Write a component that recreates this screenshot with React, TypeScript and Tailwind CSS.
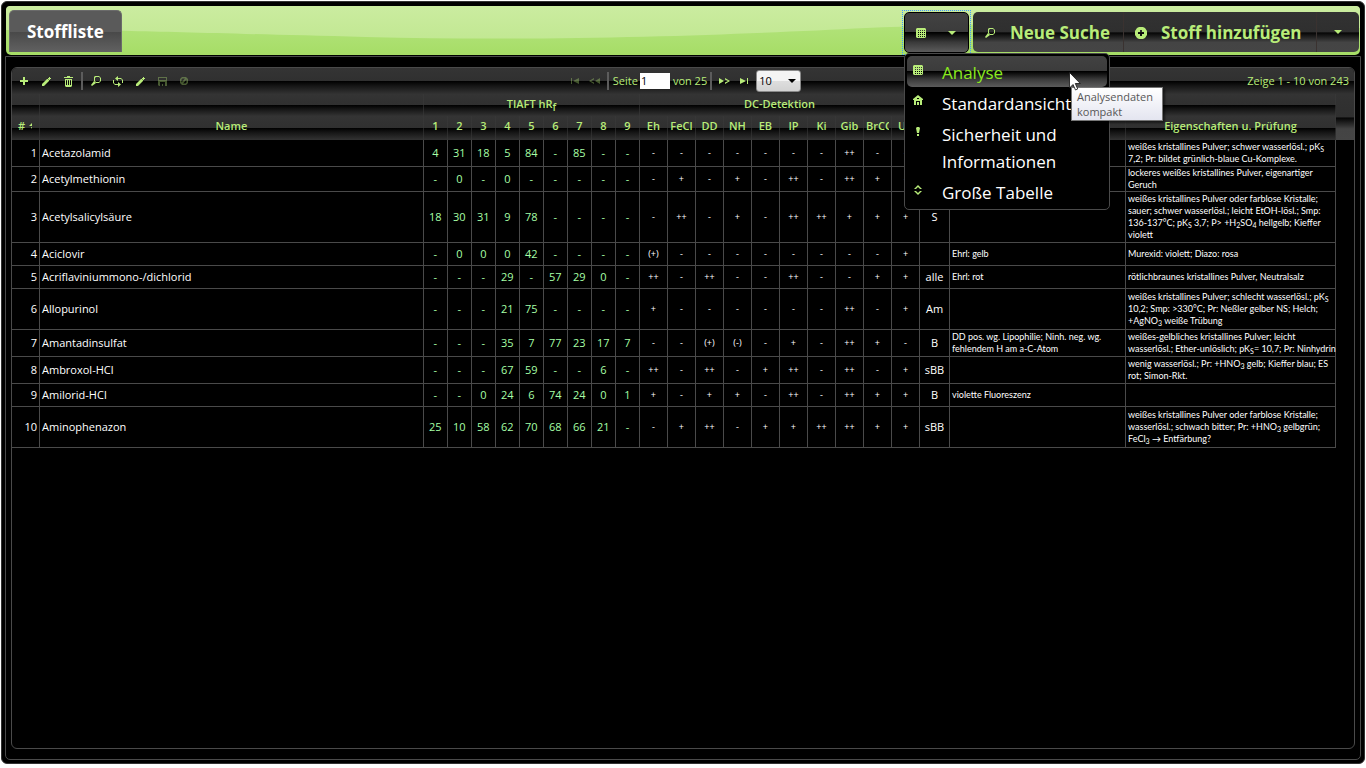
import React, { ReactNode } from "react";

const glass =
  "bg-[linear-gradient(#343434_0%,#303030_50%,#000_50%,#151515_68%,#333_100%)]";
const glassTall =
  "bg-[linear-gradient(#323232_0%,#2f2f2f_50%,#050505_52%,#444_76%,#454545_100%)]";
const glassActive =
  "bg-[linear-gradient(#424242_0%,#3b3b3b_50%,#000_50%,#3a3a3a_75%,#5c5c5c_100%)]";

type IconName =
  | "plus" | "pencil" | "trash" | "search" | "refresh" | "disk" | "cancel"
  | "first" | "prev" | "next" | "last" | "calculator" | "triangle"
  | "home" | "notice" | "updown" | "circlePlus";

const shapes: Record<IconName, ReactNode> = {
  plus: <path d="M7 4h2v3h3v2H9v3H7V9H4V7h3z" />,
  pencil: (
    <>
      <path d="M4 13v-2l5-5h1l1 1v1l-5 5z" />
      <path d="M11 4h1v1h1v1h-1v1h-1V6h-1V5h1z" />
    </>
  ),
  trash: (
    <path fillRule="evenodd" d="M4 4h3V3h3v1h3v1H4zM5 6h7v7l-1 1H6l-1-1zM6 7v5h1V7zm2 0v5h1V7zm2 0v5h1V7z" />
  ),
  search: (
    <>
      <path fillRule="evenodd" d="M7 3h4l2 2v3l-2 2H8L6 8V4zM8 4L7 5v3l1 1h3l1-1V5l-1-1z" />
      <path d="M6 8l2 2-4 3-1-1z" />
    </>
  ),
  refresh: (
    <>
      <path d="M8 3v2h3l2 2v3h-1V7l-1-1H8v2L5 5.500z" />
      <path d="M8 14v-2H5l-2-2V7h1v3l1 1h3V9l3 2.500z" />
    </>
  ),
  disk: (
    <path fillRule="evenodd" d="M4 4h9v9H5l-1-1zM5 5v2h7V5zM6 9v4h2v-2h1v2h2V9z" />
  ),
  cancel: (
    <path fillRule="evenodd" d="M6 4h4l2 2v4l-2 2H6l-2-2V6zM6.500 5.500l-1 1v3L9 5.500zM10.500 6.500L7 10.500h2.500l1-1z" />
  ),
  first: <path d="M4 5h1v6H4zM12 5v6L6 8z" />,
  prev: <path d="M13 5v6L8 8zM7 5v1.500L4 8l3 1.500V11L2 8z" />,
  next: <path d="M3 5v6l5-3zM9 5v1.500L12 8l-3 1.500V11l5-3z" />,
  last: <path d="M11 5h1v6h-1zM4 5v6l6-3z" />,
  calculator: (
    <path
      fillRule="evenodd"
      d="M4 3h8l1 1v8l-1 1H4l-1-1V4zM5 5v1h1V5zm2 0v1h1V5zm2 0v1h1V5zm2 0v1h1V5zM5 7v1h1V7zm2 0v1h1V7zm2 0v1h1V7zm2 0v1h1V7zM5 9v1h1V9zm2 0v1h1V9zm2 0v1h1V9zm2 0v1h1V9zM5 11v1h1v-1zm2 0v1h1v-1zm2 0v1h1v-1zm2 0v1h1v-1z"
    />
  ),
  triangle: <path d="M4 6h8L8 10z" />,
  home: <path fillRule="evenodd" d="M8 2l5 4v1h-1v5H4V7H3V6zM6 8v4h1V9h2v3h1V8zM7 5v1h2V5z" />,
  notice: <path d="M7 3h2l1 1-1 5H7L6 4zM7 10h2v2H7z" />,
  updown: (
    <path d="M8 3l4 4h-2L8 5 6 7H4zM8 13l4-4h-2l-2 2-2-2H4z" />
  ),
  circlePlus: (
    <path fillRule="evenodd" d="M6 2h4l2 1 2 3v4l-2 3-2 1H6l-2-1-2-3V6l2-3zM7 5v2H5v2h2v2h2V9h2V7H9V5z" />
  ),
};

function Icon({ name, className = "" }: { name: IconName; className?: string }) {
  return (
    <svg
      viewBox="0 0 16 16"
      aria-hidden="true"
      className={`size-4 shrink-0 fill-[#b8ec79] ${className}`}
    >
      {shapes[name]}
    </svg>
  );
}

function ToolButton({
  icon,
  label,
  disabled,
  width = "w-[22px]",
}: {
  icon: IconName;
  label: string;
  disabled?: boolean;
  width?: string;
}) {
  return (
    <button
      type="button"
      aria-label={label}
      disabled={disabled}
      className={`flex h-5 items-center justify-center disabled:opacity-35 ${width}`}
    >
      <Icon name={icon} />
    </button>
  );
}

function Separator({ className = "" }: { className?: string }) {
  return <span className={`h-[18px] w-0.5 bg-[#5c5c5c] ${className}`} />;
}

const S = ({ children }: { children: ReactNode }) => (
  <sub className="text-[7px] leading-none">{children}</sub>
);

interface Row {
  name: string;
  height: string;
  hrf: string;
  dc: string;
  kind?: string;
  note?: ReactNode[];
  props?: ReactNode[];
}

const rows: Row[] = [
  {
    name: "Acetazolamid", height: "h-[27px]",
    hrf: "4 31 18 5 84 - 85 - -", dc: "- - - - - - - ++ - -",
    props: [<>weißes kristallines Pulver; schwer wasserlösl.; pK<S>S</S></>, "7,2; Pr: bildet grünlich-blaue Cu-Komplexe."],
  },
  {
    name: "Acetylmethionin", height: "h-[25px]",
    hrf: "- 0 - 0 - - - - -", dc: "- + - + - ++ - ++ + -",
    props: ["lockeres weißes kristallines Pulver, eigenartiger", "Geruch"],
  },
  {
    name: "Acetylsalicylsäure", height: "h-[51px]",
    hrf: "18 30 31 9 78 - - - -", dc: "- ++ - + - ++ ++ + + +", kind: "S",
    props: [
      "weißes kristallines Pulver oder farblose Kristalle;",
      "sauer; schwer wasserlösl.; leicht EtOH-lösl.; Smp:",
      <>136-137°C; pK<S>S</S> 3,7; P&gt; +H<S>2</S>SO<S>4</S> hellgelb; Kieffer</>,
      "violett",
    ],
  },
  {
    name: "Aciclovir", height: "h-[23px]",
    hrf: "- 0 0 0 42 - - - -", dc: "(+) - - - - - - - - +",
    note: ["Ehrl: gelb"], props: ["Murexid: violett; Diazo: rosa"],
  },
  {
    name: "Acriflaviniummono-/dichlorid", height: "h-[23px]",
    hrf: "- - - 29 - 57 29 0 -", dc: "++ - ++ - - ++ - - + +", kind: "alle",
    note: ["Ehrl: rot"], props: ["rötlichbraunes kristallines Pulver, Neutralsalz"],
  },
  {
    name: "Allopurinol", height: "h-[41px]",
    hrf: "- - - 21 75 - - - -", dc: "+ - - - - - - ++ - +", kind: "Am",
    props: [
      <>weißes kristallines Pulver; schlecht wasserlösl.; pK<S>S</S></>,
      "10,2; Smp: >330°C; Pr: Neßler gelber NS; Helch;",
      <>+AgNO<S>3</S> weiße Trübung</>,
    ],
  },
  {
    name: "Amantadinsulfat", height: "h-[27px]",
    hrf: "- - - 35 7 77 23 17 7", dc: "- - (+) (-) - + - ++ + -", kind: "B",
    note: ["DD pos. wg. Lipophilie; Ninh. neg. wg.", "fehlendem H am a-C-Atom"],
    props: ["weißes-gelbliches kristallines Pulver; leicht", <>wasserlösl.; Ether-unlöslich; pK<S>S</S>= 10,7; Pr: Ninhydrin</>],
  },
  {
    name: "Ambroxol-HCl", height: "h-[27px]",
    hrf: "- - - 67 59 - - 6 -", dc: "++ - ++ - + ++ - ++ - +", kind: "sBB",
    props: [<>wenig wasserlösl.; Pr: +HNO<S>3</S> gelb; Kieffer blau; ES</>, "rot; Simon-Rkt."],
  },
  {
    name: "Amilorid-HCl", height: "h-[23px]",
    hrf: "- - 0 24 6 74 24 0 1", dc: "+ - + + - ++ - ++ + +", kind: "B",
    note: ["violette Fluoreszenz"],
  },
  {
    name: "Aminophenazon", height: "h-[41px]",
    hrf: "25 10 58 62 70 68 66 21 -", dc: "- + ++ - + + ++ ++ + +", kind: "sBB",
    props: [
      "weißes kristallines Pulver oder farblose Kristalle;",
      <>wasserlösl.; schwach bitter; Pr: +HNO<S>3</S> gelbgrün;</>,
      <>FeCl<S>3</S> → Entfärbung?</>,
    ],
  },
];

const hrfColumns = ["1", "2", "3", "4", "5", "6", "7", "8", "9"];
const dcColumns = ["Eh", "FeCl", "DD", "NH", "EB", "IP", "Ki", "Gib", "BrCC", "UV"];

const cell = "border-r border-b border-[#4a4a4a] p-0";
const smallCell = `${cell} pl-0.5 font-['Lato','Open_Sans',sans-serif] text-[9px] leading-3`;
const headCell = `border-r border-r-[#3a3a3a]/60 px-0 pt-0 font-semibold ${glass}`;

function Lines({ lines }: { lines?: ReactNode[] }) {
  return (
    <>
      {lines?.map((line, i) => (
        <span key={i} className="block whitespace-nowrap">{line}</span>
      ))}
    </>
  );
}

function SubstanceTable() {
  return (
    <table className="w-full table-fixed border-separate border-spacing-0 text-[11px] leading-4">
      <colgroup>
        <col className="w-7" />
        <col />
        {hrfColumns.map((c) => <col key={c} className="w-6" />)}
        {dcColumns.map((c) => <col key={c} className="w-7" />)}
        <col className="w-[30px]" />
        <col className="w-44" />
        <col className="w-[210px]" />
      </colgroup>
      <thead className="text-[#b8ec79]">
        <tr className="h-[22px]">
          <th className={headCell} />
          <th className={headCell} />
          <th colSpan={9} className={`${headCell} pb-0.5`}>
            TIAFT hR<sub className="text-[10px] leading-none">f</sub>
          </th>
          <th colSpan={10} className={`${headCell} pb-0.5`}>DC-Detektion</th>
          <th className={headCell} />
          <th className={headCell} />
          <th className={headCell} />
        </tr>
        <tr className="h-6">
          <th className={`${headCell} pb-1`}>
            <span className="flex items-center justify-center gap-1">
              #
              <svg viewBox="0 0 4 6" className="h-1.5 w-1 fill-current" aria-hidden="true">
                <path d="M0 3l3-3v3zM2 4h1v2z" />
              </svg>
            </span>
          </th>
          <th className={`${headCell} pb-1`}>Name</th>
          {[...hrfColumns, ...dcColumns].map((c) => (
            <th key={c} className={`${headCell} pb-1`}>
              <span className="mx-0.5 block overflow-hidden text-clip whitespace-nowrap">{c}</span>
            </th>
          ))}
          <th className={headCell} />
          <th className={headCell} />
          <th className={`${headCell} pb-1`}>Eigenschaften u. Prüfung</th>
        </tr>
      </thead>
      <tbody className="bg-black text-white">
        {rows.map((row, i) => (
          <tr key={row.name} className={row.height}>
            <td className={`${cell} pr-0.5 text-right`}>{i + 1}</td>
            <td className={`${cell} pl-0.5`}>{row.name}</td>
            {row.hrf.split(" ").map((v, k) => (
              <td key={k} className={`${cell} text-center text-[#a6ffa6]`}>{v}</td>
            ))}
            {row.dc.split(" ").map((v, k) => (
              <td key={k} className={`${cell} text-center text-[9px]`}>{v}</td>
            ))}
            <td className={`${cell} text-center`}>{row.kind}</td>
            <td className={smallCell}><Lines lines={row.note} /></td>
            <td className={smallCell}><Lines lines={row.props} /></td>
          </tr>
        ))}
      </tbody>
    </table>
  );
}

function Toolbar() {
  return (
    <div className={`grid h-[26px] grid-cols-[1fr_auto_1fr] items-center rounded-t-[5px] text-[11px] text-[#b8ec79] ${glass}`}>
      <div className="flex items-center pl-px">
        <ToolButton icon="plus" label="Neu" />
        <ToolButton icon="pencil" label="Bearbeiten" />
        <ToolButton icon="trash" label="Löschen" />
        <Separator className="mx-0.5" />
        <ToolButton icon="search" label="Suchen" />
        <ToolButton icon="refresh" label="Neu laden" />
        <ToolButton icon="pencil" label="Zeile bearbeiten" />
        <ToolButton icon="disk" label="Speichern" disabled />
        <ToolButton icon="cancel" label="Abbrechen" disabled />
      </div>
      <div className="flex items-center gap-0.5">
        <div className="flex">
          <ToolButton icon="first" label="Erste Seite" disabled width="w-5" />
          <ToolButton icon="prev" label="Vorige Seite" disabled width="w-5" />
        </div>
        <Separator className="mr-0.5" />
        <label htmlFor="page">Seite</label>
        <input id="page" defaultValue="1" className="h-4 w-[30px] bg-white px-px text-[11px] text-black" />
        <span className="px-px">von 25</span>
        <Separator />
        <div className="flex">
          <ToolButton icon="next" label="Nächste Seite" width="w-5" />
          <ToolButton icon="last" label="Letzte Seite" width="w-5" />
        </div>
        <div className="relative">
          <select
            aria-label="Zeilen pro Seite"
            defaultValue="10"
            className="block h-[22px] w-[45px] appearance-none rounded-[3px] border border-[#8a8a8a] bg-[linear-gradient(#f4f4f4_50%,#dedede_50%,#d2d2d2)] pl-0.5 text-[11px] text-black"
          >
            <option>10</option>
            <option>20</option>
            <option>50</option>
          </select>
          <svg viewBox="0 0 8 4" className="pointer-events-none absolute right-[5px] top-[9px] h-1 w-2" aria-hidden="true">
            <path d="M0 0h8L4 4z" />
          </svg>
        </div>
      </div>
      <div className="pr-[5px] text-right">Zeige 1 - 10 von 243</div>
    </div>
  );
}

const menu: { icon: IconName; label: string }[] = [
  { icon: "calculator", label: "Analyse" },
  { icon: "home", label: "Standardansicht" },
  { icon: "notice", label: "Sicherheit und Informationen" },
  { icon: "updown", label: "Große Tabelle" },
];

function ViewMenu() {
  return (
    <div className="absolute left-0 top-full z-10 w-[206px] rounded-[5px] border border-[#4a4a4a] bg-black p-0.5 text-[17px] font-normal leading-[27px] text-white">
      <ul>
        {menu.map((item, i) => (
          <li key={item.label}>
            <a
              href="#"
              className={`flex gap-4 rounded-[5px] pb-px pl-[3px] pt-[3px] ${i === 0 ? `text-[#8aea1e] ${glassActive}` : ""}`}
            >
              <Icon name={item.icon} className="mt-[3px]" />
              <span>{item.label}</span>
            </a>
          </li>
        ))}
      </ul>
      <div
        role="tooltip"
        className="pointer-events-none absolute left-[166px] top-[33px] w-[92px] border border-[#767676] bg-linear-to-b from-white to-[#e4e5f0] py-px pl-[5px] text-[11px] leading-[15px] text-[#575757] shadow-[2px_2px_2px_rgba(0,0,0,0.5)]"
      >
        Analysendaten
        <br />
        kompakt
      </div>
      <svg
        viewBox="0 0 12 19"
        aria-hidden="true"
        className="pointer-events-none absolute left-[164px] top-[18px] h-[19px] w-3"
      >
        <path d="M0.500 0.500v15.500l3.500-3.500 2.500 5.500 2.200-1-2.400-5.500h5z" fill="#fff" stroke="#111" strokeWidth="0.800" />
      </svg>
    </div>
  );
}

function Header() {
  return (
    <header className="relative mx-px mt-px flex h-[49px] items-start justify-between rounded-[5px] bg-linear-to-b from-[#b9e685] to-[#a6dd66]">
      <svg viewBox="0 0 1354 49" preserveAspectRatio="none" className="absolute inset-0 size-full" aria-hidden="true">
        <defs>
          <linearGradient id="shine" x1="0" y1="0" x2="0" y2="1">
            <stop offset="0" stopColor="#cbeca0" />
            <stop offset="1" stopColor="#c2e893" />
          </linearGradient>
        </defs>
        <path d="M4 0H1350Q1354 0 1354 4V22C1180 16 980 16 860 22S560 36 360 31S120 24 0 24V4Q0 0 4 0z" fill="url(#shine)" />
      </svg>
      <h1 className="relative ml-[3px] mt-1 rounded-t-[5px] border border-b-0 border-[#6b6b6b] bg-[linear-gradient(#5a5a5a_50%,#484848_50%,#616161)] px-[17px] text-[17px] font-bold leading-[41px] text-white">
        Stoffliste
      </h1>
      <div className="relative mr-px mt-1.5 flex gap-1 text-[17px] font-bold text-[#b8ec79]">
        <div className="relative">
          <span className="pointer-events-none absolute -inset-x-0.5 -inset-y-0.5 border border-dotted border-[#3f9cff]" />
          <button
            type="button"
            aria-label="Ansicht wählen"
            aria-expanded="true"
            className={`relative flex h-[41px] w-[65px] items-center justify-between rounded-[5px] border border-black pl-2 pr-2 ${glassActive}`}
          >
            <Icon name="calculator" />
            <Icon name="triangle" />
          </button>
          <ViewMenu />
        </div>
        <div className={`flex h-10 rounded-[5px] ${glassTall}`}>
          <button type="button" className="flex w-[151px] items-center gap-3 whitespace-nowrap border-r border-[#3a3230] pl-[9px] pt-0.5">
            <Icon name="search" />
            <span>Neue Suche</span>
          </button>
          <button type="button" className="flex w-[193px] items-center gap-3 whitespace-nowrap border-r border-[#3a3230] pl-[9px] pt-0.5">
            <Icon name="circlePlus" />
            <span>Stoff hinzufügen</span>
          </button>
          <button type="button" aria-label="Weitere Optionen" className="flex w-[42px] items-center justify-center">
            <Icon name="triangle" />
          </button>
        </div>
      </div>
    </header>
  );
}

export default function App() {
  return (
    <div className="flex min-h-screen flex-col bg-white px-px pt-px pb-1 font-['Open_Sans','Noto_Sans',sans-serif]">
      <div className="flex grow flex-col rounded-[6px] border border-[#333] bg-black p-[3px]">
        <Header />
        <main className="mt-px flex grow flex-col rounded-b-[5px] border border-[#4a4a4a] px-[5px] py-[10px]">
          <section className="grow rounded-[6px] border border-[#4a4a4a]">
            <Toolbar />
            <div className="flex items-start">
              <div className="min-w-0 grow">
                <SubstanceTable />
              </div>
              <div className={`h-[46px] w-[18px] shrink-0 ${glassTall}`} />
            </div>
          </section>
        </main>
      </div>
    </div>
  );
}
